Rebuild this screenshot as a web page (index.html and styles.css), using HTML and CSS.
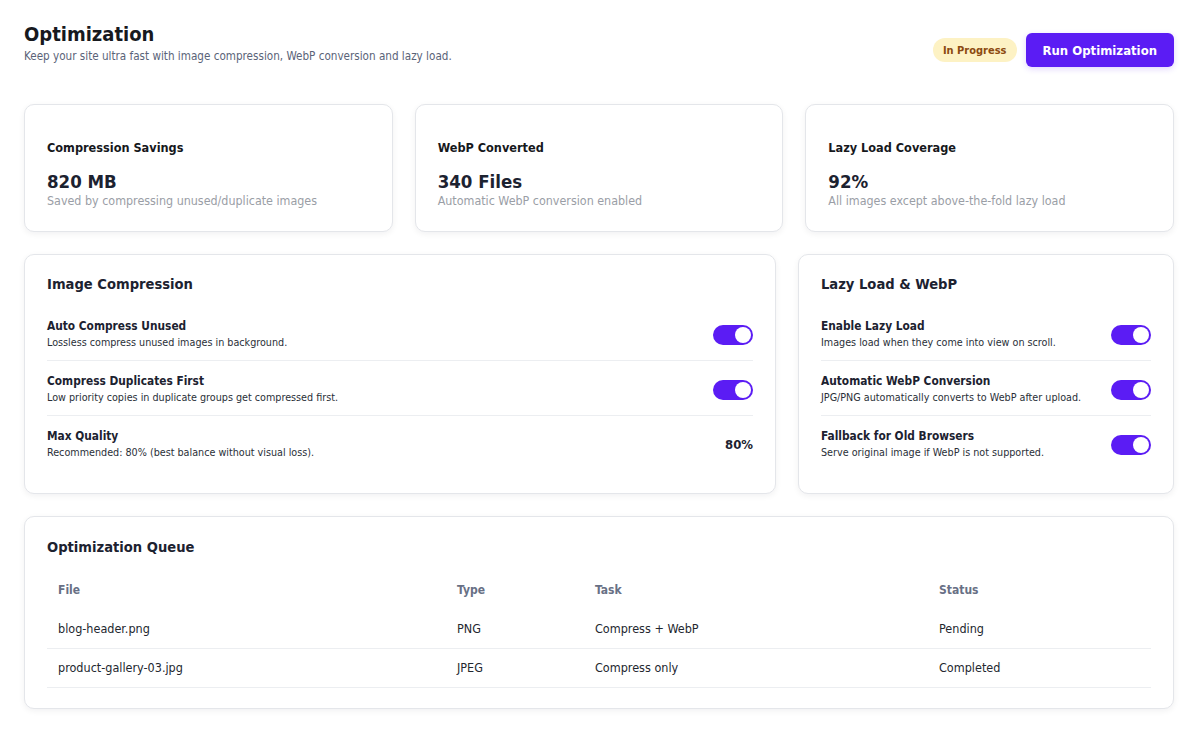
FILE: index.html
```html
<!DOCTYPE html>
<html lang="en">
<head>
<meta charset="utf-8">
<title>Optimization</title>
<link rel="stylesheet" href="styles.css">
</head>
<body>
<div class="page">
  <header class="page-header">
    <div class="heading">
      <h1 class="title">Optimization</h1>
      <p class="subtitle">Keep your site ultra fast with image compression, WebP conversion and lazy load.</p>
    </div>
    <div class="actions">
      <span class="badge">In Progress</span>
      <button class="btn-primary" type="button">Run Optimization</button>
    </div>
  </header>

  <section class="stats">
    <div class="card stat">
      <div class="stat-label">Compression Savings</div>
      <div class="stat-value">820 MB</div>
      <div class="stat-note">Saved by compressing unused/duplicate images</div>
    </div>
    <div class="card stat">
      <div class="stat-label">WebP Converted</div>
      <div class="stat-value">340 Files</div>
      <div class="stat-note">Automatic WebP conversion enabled</div>
    </div>
    <div class="card stat">
      <div class="stat-label">Lazy Load Coverage</div>
      <div class="stat-value">92%</div>
      <div class="stat-note">All images except above-the-fold lazy load</div>
    </div>
  </section>

  <section class="settings">
    <div class="card panel">
      <h2 class="panel-title">Image Compression</h2>
      <div class="setting">
        <div class="setting-text">
          <div class="setting-name">Auto Compress Unused</div>
          <div class="setting-desc">Lossless compress unused images in background.</div>
        </div>
        <span class="toggle on"></span>
      </div>
      <div class="setting">
        <div class="setting-text">
          <div class="setting-name">Compress Duplicates First</div>
          <div class="setting-desc">Low priority copies in duplicate groups get compressed first.</div>
        </div>
        <span class="toggle on"></span>
      </div>
      <div class="setting">
        <div class="setting-text">
          <div class="setting-name">Max Quality</div>
          <div class="setting-desc">Recommended: 80% (best balance without visual loss).</div>
        </div>
        <span class="setting-value">80%</span>
      </div>
    </div>

    <div class="card panel">
      <h2 class="panel-title">Lazy Load &amp; WebP</h2>
      <div class="setting">
        <div class="setting-text">
          <div class="setting-name">Enable Lazy Load</div>
          <div class="setting-desc">Images load when they come into view on scroll.</div>
        </div>
        <span class="toggle on"></span>
      </div>
      <div class="setting">
        <div class="setting-text">
          <div class="setting-name">Automatic WebP Conversion</div>
          <div class="setting-desc">JPG/PNG automatically converts to WebP after upload.</div>
        </div>
        <span class="toggle on"></span>
      </div>
      <div class="setting">
        <div class="setting-text">
          <div class="setting-name">Fallback for Old Browsers</div>
          <div class="setting-desc">Serve original image if WebP is not supported.</div>
        </div>
        <span class="toggle on"></span>
      </div>
    </div>
  </section>

  <section class="card queue">
    <h2 class="panel-title">Optimization Queue</h2>
    <table class="queue-table">
      <colgroup>
        <col class="col-file">
        <col class="col-type">
        <col class="col-task">
        <col class="col-status">
      </colgroup>
      <thead>
        <tr><th>File</th><th>Type</th><th>Task</th><th>Status</th></tr>
      </thead>
      <tbody>
        <tr><td>blog-header.png</td><td>PNG</td><td>Compress + WebP</td><td>Pending</td></tr>
        <tr><td>product-gallery-03.jpg</td><td>JPEG</td><td>Compress only</td><td>Completed</td></tr>
      </tbody>
    </table>
  </section>
</div>
</body>
</html>
```

FILE: styles.css
```css
* {
  box-sizing: border-box;
}

html, body {
  margin: 0;
  padding: 0;
  background: #ffffff;
}

body {
  font-family: "DejaVu Sans Condensed", "DejaVu Sans", sans-serif;
  color: #1f2329;
}

.page {
  padding: 22px 26px 26px 24px;
}

/* Header */
.page-header {
  display: flex;
  justify-content: space-between;
  align-items: flex-start;
}

.title {
  margin: 0;
  font-size: 20px;
  line-height: 25px;
  font-weight: 700;
  color: #17191e;
}

.subtitle {
  margin: 1px 0 0;
  font-size: 11.6px;
  line-height: 16px;
  color: #5a6378;
}

.actions {
  display: flex;
  align-items: center;
  gap: 9px;
  margin-top: 11px;
}

.badge {
  display: inline-flex;
  align-items: center;
  height: 24px;
  padding: 0 10px;
  border-radius: 12px;
  background: #fdf2c4;
  color: #8c4a10;
  font-size: 11px;
  font-weight: 700;
}

.btn-primary {
  height: 34px;
  padding: 0 17px;
  border: none;
  border-radius: 6px;
  background: #5b1cf4;
  color: #ffffff;
  font-family: inherit;
  font-size: 13px;
  font-weight: 700;
  box-shadow: 0 2px 6px rgba(91, 28, 244, 0.18);
}

/* Cards */
.card {
  background: #ffffff;
  border: 1px solid #e4e6ea;
  border-radius: 10px;
  box-shadow: 0 2px 6px rgba(15, 23, 42, 0.06);
}

.stats {
  display: grid;
  grid-template-columns: repeat(3, 1fr);
  gap: 22px;
  margin-top: 37px;
}

.stat {
  padding: 35px 22px 22px;
}

.stat-label {
  font-size: 12.6px;
  line-height: 16px;
  font-weight: 700;
  color: #16181c;
}

.stat-value {
  margin-top: 15px;
  font-size: 18.5px;
  line-height: 22px;
  font-weight: 700;
  color: #1c2230;
}

.stat-note {
  font-size: 12.4px;
  line-height: 16px;
  color: #9a9ea6;
}

/* Settings panels */
.settings {
  display: grid;
  grid-template-columns: 2fr 1fr;
  gap: 22px;
  margin-top: 22px;
}

.panel {
  padding: 19px 22px 23px;
}

.panel-title {
  margin: 0 0 12px;
  font-size: 14.6px;
  line-height: 20px;
  font-weight: 700;
  color: #1c2230;
}

.setting {
  display: flex;
  align-items: center;
  justify-content: space-between;
  padding: 12px 0 9px;
  border-bottom: 1px solid #eceef1;
}

.setting:last-child {
  border-bottom: none;
}

.setting-name {
  font-size: 11.8px;
  line-height: 16px;
  font-weight: 700;
  color: #1c2230;
}

.setting-desc {
  font-size: 10.7px;
  line-height: 17px;
  color: #2a2f38;
}

.setting-value {
  font-size: 13px;
  font-weight: 700;
  color: #1c2230;
}

.toggle {
  position: relative;
  flex: none;
  width: 40px;
  height: 20px;
  border-radius: 10px;
  background: #d1d5db;
}

.toggle.on {
  background: #5b1cf4;
}

.toggle::after {
  content: "";
  position: absolute;
  top: 2px;
  left: 2px;
  width: 16px;
  height: 16px;
  border-radius: 50%;
  background: #ffffff;
}

.toggle.on::after {
  left: 22px;
}

/* Queue */
.queue {
  margin-top: 22px;
  padding: 20px 22px 20px;
}

.queue .panel-title {
  margin-bottom: 13px;
}

.queue-table {
  width: 100%;
  border-collapse: collapse;
  font-size: 12.5px;
}

.col-file { width: 399px; }
.col-type { width: 138px; }
.col-task { width: 344px; }

.queue-table th {
  text-align: left;
  height: 39px;
  padding: 0 11px;
  font-size: 12px;
  font-weight: 700;
  color: #687085;
}

.queue-table td {
  height: 39px;
  padding: 0 11px;
  color: #23272f;
  border-bottom: 1px solid #eceef1;
}
```
